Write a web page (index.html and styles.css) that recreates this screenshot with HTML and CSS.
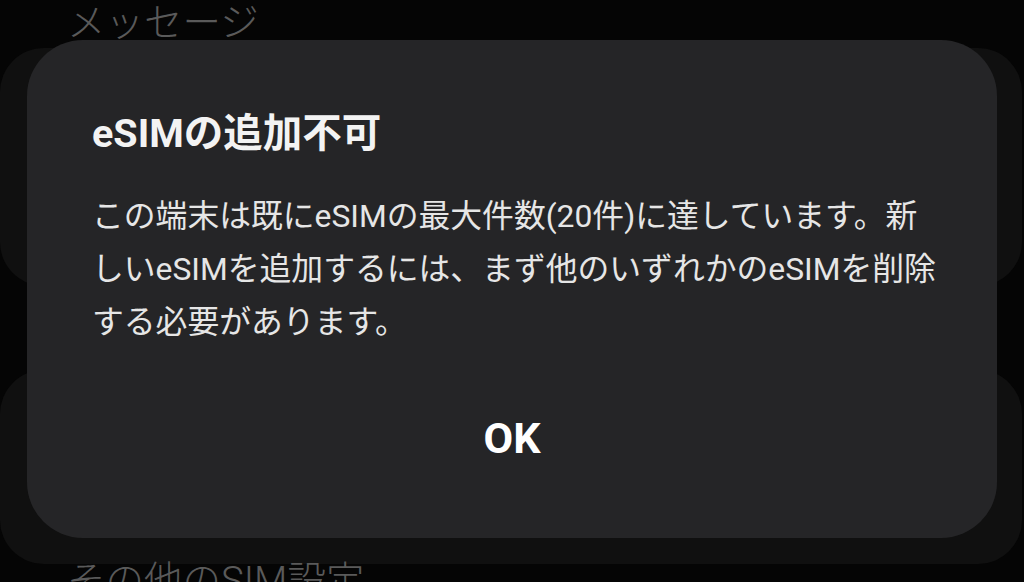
FILE: index.html
```html
<!DOCTYPE html>
<html lang="ja">
<head>
<meta charset="utf-8">
<title>eSIMの追加不可</title>
<link rel="stylesheet" href="styles.css">
</head>
<body>
<div class="screen">
  <div class="settings">
    <div class="section-label">メッセージ</div>
    <div class="card card-top"></div>
    <div class="card card-mid"></div>
    <div class="section-label section-bottom">その他のSIM設定</div>
  </div>
  <div class="dialog" role="alertdialog">
    <h1 class="dialog-title">eSIMの追加不可</h1>
    <p class="dialog-body">この端末は既にeSIMの最大件数(20件)に達しています。新<br>しいeSIMを追加するには、まず他のいずれかのeSIMを削除<br>する必要があります。</p>
    <div class="dialog-actions">
      <button class="dialog-button">OK</button>
    </div>
  </div>
</div>
</body>
</html>
```

FILE: styles.css
```css
html, body {
  margin: 0;
  padding: 0;
  background: #050505;
}

.screen {
  position: relative;
  width: 1024px;
  height: 582px;
  overflow: hidden;
  font-family: "Roboto", "Noto Sans CJK JP", sans-serif;
}

.settings {
  display: flex;
  flex-direction: column;
}

.section-label {
  padding-left: 67px;
  font-size: 38.5px;
  line-height: 46px;
  color: #5a5a5a;
  font-weight: 300;
  white-space: nowrap;
}

.card {
  margin: 0 2px 0 0;
  background: #101010;
  border-radius: 44px;
}

.card-top {
  height: 238px;
  margin-top: 2px;
}

.card-mid {
  height: 194px;
  margin-top: 84px;
}

.section-bottom {
  margin-top: -6px;
}

.dialog {
  position: absolute;
  left: 27px;
  top: 40px;
  width: 970px;
  height: 498px;
  box-sizing: border-box;
  padding: 71px 65px 0;
  background: #252527;
  border-radius: 56px;
  display: flex;
  flex-direction: column;
}

.dialog-title {
  margin: 0;
  font-size: 39.5px;
  line-height: 46px;
  font-weight: 700;
  color: #f3f3f3;
  white-space: nowrap;
}

.dialog-body {
  margin: 33px 0 0;
  font-size: 31.8px;
  line-height: 53px;
  font-weight: 400;
  color: #e6e6e6;
  white-space: nowrap;
}

.dialog-actions {
  margin-top: 64px;
  display: flex;
  justify-content: center;
}

.dialog-button {
  border: 0;
  background: transparent;
  padding: 0;
  font-family: "Roboto", "Noto Sans CJK JP", sans-serif;
  font-size: 43px;
  line-height: 50px;
  font-weight: 700;
  color: #ffffff;
}
```
